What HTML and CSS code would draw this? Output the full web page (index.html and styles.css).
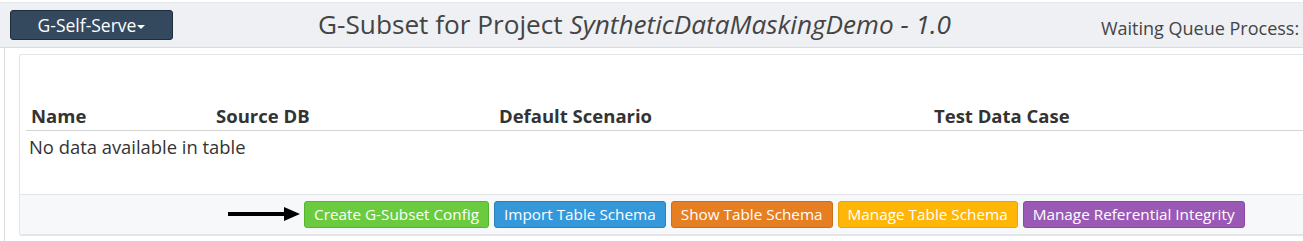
FILE: index.html
```html
<!DOCTYPE html>
<html lang="en">
<head>
    <meta charset="UTF-8">
    <title>G-Subset</title>
    <link rel="stylesheet" href="styles.css">
</head>
<body>

    <div class="top-bar">
        <button class="self-serve-btn">G-Self-Serve<span class="caret"></span></button>
        <h1 class="page-title">G-Subset for Project <em>SyntheticDataMaskingDemo - 1.0</em></h1>
        <span class="queue-info">Waiting Queue Process:</span>
    </div>

    <div class="content">
        <div class="panel">
            <div class="panel-body">
                <div class="data-table">
                    <div class="table-head">
                        <div>Name</div>
                        <div>Source DB</div>
                        <div>Default Scenario</div>
                        <div>Test Data Case</div>
                    </div>
                    <div class="table-empty">No data available in table</div>
                </div>
            </div>
            <div class="panel-footer">
                <!-- freccia che indica il primo bottone -->
                <svg class="pointer-arrow" width="72" height="16" viewBox="0 0 72 16">
                    <rect x="0" y="6" width="58" height="4" fill="#000"/>
                    <polygon points="56,1 72,8 56,15" fill="#000"/>
                </svg>
                <button class="btn btn-green">Create G-Subset Config</button>
                <button class="btn btn-blue">Import Table Schema</button>
                <button class="btn btn-orange">Show Table Schema</button>
                <button class="btn btn-yellow">Manage Table Schema</button>
                <button class="btn btn-purple">Manage Referential Integrity</button>
            </div>
        </div>
    </div>

</body>
</html>
```

FILE: styles.css
```css
body {
    margin: 0;
    font-family: 'Open Sans', 'Liberation Sans', sans-serif;
    color: #333;
    background: #fff;
    overflow: hidden;
}

/* barra superiore */
.top-bar {
    display: flex;
    align-items: center;
    height: 44px;
    margin-top: 2px;
    padding: 0 10px;
    background-color: #eef0f4;
    border-top: 1px solid #e6e8ec;
    border-bottom: 1px solid #d9dbdf;
    white-space: nowrap;
}

.self-serve-btn {
    flex-shrink: 0;
    width: 163px;
    height: 30px;
    background-color: #34495e;
    border: 1px solid #1f2d3a;
    border-radius: 3px;
    color: #fff;
    font-family: inherit;
    font-size: 17.5px;
    padding: 0;
}

.caret {
    display: inline-block;
    width: 0;
    height: 0;
    margin-left: 1px;
    vertical-align: middle;
    border-top: 4px solid #fff;
    border-left: 4px solid transparent;
    border-right: 4px solid transparent;
}

.page-title {
    margin: -2px 150px 0 145px;
    font-size: 26.2px;
    font-weight: 400;
    color: #444;
}

.page-title em {
    font-weight: 400;
}

.queue-info {
    font-size: 18px;
    color: #444;
    margin-top: 6px;
}

/* contenuto */
.content {
    margin-left: 4px;
    padding: 6px 0 0 14px;
    border-left: 1px solid #dcdcdc;
    height: 188px;
}

.panel {
    border: 1px solid #e2e4e8;
    border-right: none;
    border-radius: 3px 0 0 3px;
    box-shadow: 0 1px 1px #e4e4e4;
}

.panel-body {
    padding: 45px 0 0 6px;
    height: 94px;
}

.table-head {
    display: grid;
    grid-template-columns: 185px 283px 435px 1fr;
    padding: 0 5px;
    height: 30px;
    align-items: center;
    font-size: 18.5px;
    font-weight: 700;
    color: #333;
    border-bottom: 1px solid #d4d4d4;
}

.table-empty {
    padding: 3px 3px;
    font-size: 18.4px;
    color: #333;
}

.panel-footer {
    display: flex;
    align-items: center;
    gap: 5px;
    height: 39px;
    padding-left: 208px;
    background-color: #f7f8fa;
    border-top: 1px solid #e2e4e8;
}

.pointer-arrow {
    margin-right: -1px;
    margin-top: -2px;
}

.btn {
    height: 27px;
    margin-top: -1px;
    padding: 0 9px;
    border: 1px solid;
    border-radius: 3px;
    color: #fff;
    font-family: inherit;
    font-size: 15.3px;
}

.btn-green {
    background-color: #6acb3f;
    border-color: #58b32f;
}

.btn-blue {
    background-color: #3498db;
    border-color: #2a80b9;
}

.btn-orange {
    background-color: #e67e22;
    border-color: #cf6d17;
}

.btn-yellow {
    background-color: #ffb606;
    border-color: #e9a400;
}

.btn-purple {
    background-color: #9b59b6;
    border-color: #8a4aa4;
}
```
